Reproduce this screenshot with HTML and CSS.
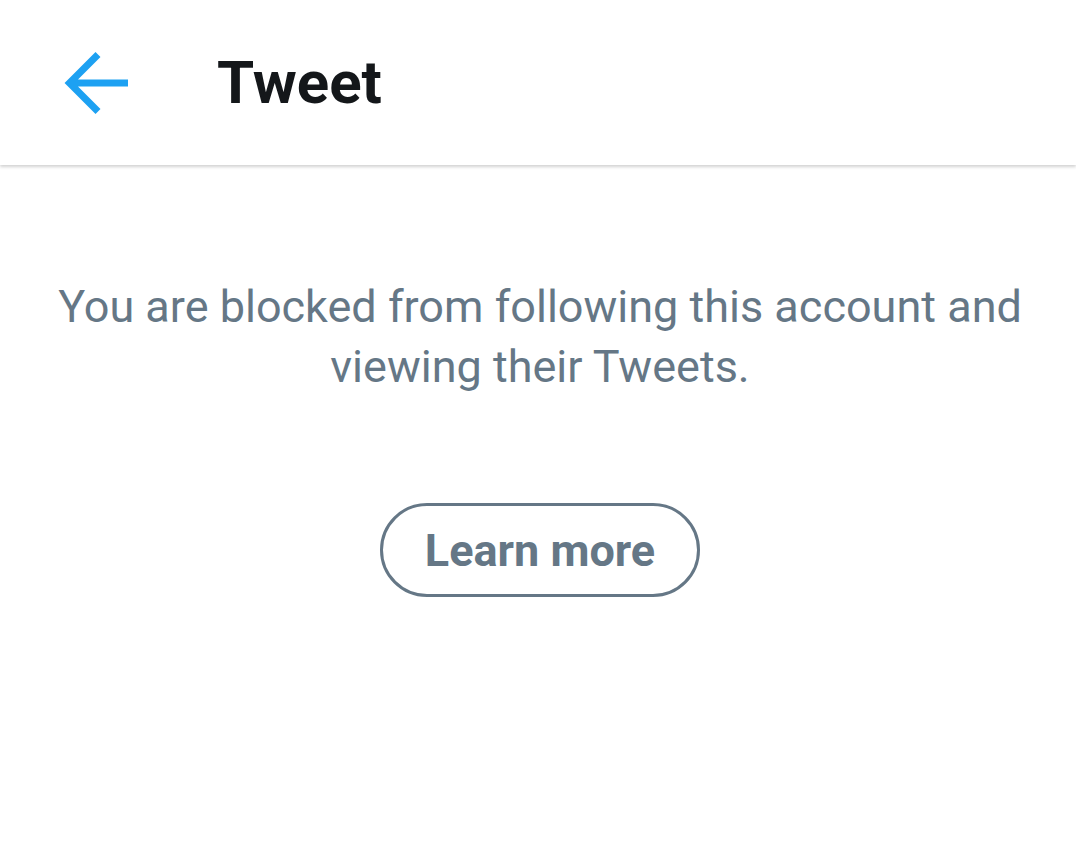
FILE: index.html
```html
<!DOCTYPE html>
<html lang="en">
<head>
    <meta charset="UTF-8">
    <title>Tweet</title>
    <link rel="stylesheet" href="styles.css">
</head>
<body>
    <div class="header">
        <a href="#" class="back-button" aria-label="Back">
            <svg viewBox="0 0 64 64" width="64" height="64">
                <path d="M64 32H6M34 3.5L5.5 32l28.5 28.5" fill="none" stroke="#1da1f2" stroke-width="7"/>
            </svg>
        </a>
        <h1>Tweet</h1>
    </div>

    <div class="container">
        <p class="message">You are blocked from following this account and viewing their Tweets.</p>
        <a href="#" class="learn-btn">Learn more</a>
    </div>
</body>
</html>
```

FILE: styles.css
```css
* {
    margin: 0;
    padding: 0;
    box-sizing: border-box;
}

body {
    font-family: Roboto, 'Noto Sans', sans-serif;
    background: white;
    min-height: 100vh;
}

.header {
    height: 165px;
    display: flex;
    align-items: center;
    padding-left: 64px;
    background: white;
    box-shadow: 0 2px 3px rgba(0, 0, 0, 0.18);
}

.back-button {
    display: flex;
    width: 64px;
    height: 64px;
}

.header h1 {
    margin-left: 89px;
    color: #14171a;
    font-size: 60px;
    font-weight: 700;
}

.container {
    display: flex;
    flex-direction: column;
    align-items: center;
    padding: 112px 18px 0 22px;
}

.message {
    color: #657786;
    font-size: 45px;
    line-height: 60px;
    text-align: center;
    max-width: 1040px;
}

.learn-btn {
    margin-top: 106px;
    width: 320px;
    height: 94px;
    display: flex;
    align-items: center;
    justify-content: center;
    border: 3px solid #657786;
    border-radius: 47px;
    color: #657786;
    font-size: 45px;
    font-weight: 700;
    text-decoration: none;
}
```
